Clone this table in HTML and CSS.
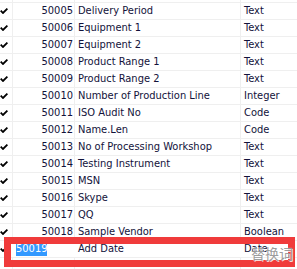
FILE: index.html
```html
<!DOCTYPE html>
<html>
<head>
<meta charset="utf-8">
<link rel="stylesheet" href="styles.css">
</head>
<body>
<div class="grid">
  <div class="row top"><div class="c chk"></div><div class="c num"></div><div class="c name"></div><div class="c type"></div></div>
  <div class="row"><div class="c chk"><svg viewBox="0 0 8 6" width="8" height="6"><path d="M0.7 2.6 L3 5 L7.4 0.6" fill="none" stroke="#000" stroke-width="1.8"/></svg></div><div class="c num">50005</div><div class="c name">Delivery Period</div><div class="c type">Text</div></div>
  <div class="row"><div class="c chk"><svg viewBox="0 0 8 6" width="8" height="6"><path d="M0.7 2.6 L3 5 L7.4 0.6" fill="none" stroke="#000" stroke-width="1.8"/></svg></div><div class="c num">50006</div><div class="c name">Equipment 1</div><div class="c type">Text</div></div>
  <div class="row"><div class="c chk"><svg viewBox="0 0 8 6" width="8" height="6"><path d="M0.7 2.6 L3 5 L7.4 0.6" fill="none" stroke="#000" stroke-width="1.8"/></svg></div><div class="c num">50007</div><div class="c name">Equipment 2</div><div class="c type">Text</div></div>
  <div class="row"><div class="c chk"><svg viewBox="0 0 8 6" width="8" height="6"><path d="M0.7 2.6 L3 5 L7.4 0.6" fill="none" stroke="#000" stroke-width="1.8"/></svg></div><div class="c num">50008</div><div class="c name">Product Range 1</div><div class="c type">Text</div></div>
  <div class="row"><div class="c chk"><svg viewBox="0 0 8 6" width="8" height="6"><path d="M0.7 2.6 L3 5 L7.4 0.6" fill="none" stroke="#000" stroke-width="1.8"/></svg></div><div class="c num">50009</div><div class="c name">Product Range 2</div><div class="c type">Text</div></div>
  <div class="row"><div class="c chk"><svg viewBox="0 0 8 6" width="8" height="6"><path d="M0.7 2.6 L3 5 L7.4 0.6" fill="none" stroke="#000" stroke-width="1.8"/></svg></div><div class="c num">50010</div><div class="c name">Number of Production Line</div><div class="c type">Integer</div></div>
  <div class="row"><div class="c chk"><svg viewBox="0 0 8 6" width="8" height="6"><path d="M0.7 2.6 L3 5 L7.4 0.6" fill="none" stroke="#000" stroke-width="1.8"/></svg></div><div class="c num">50011</div><div class="c name">ISO Audit No</div><div class="c type">Code</div></div>
  <div class="row"><div class="c chk"><svg viewBox="0 0 8 6" width="8" height="6"><path d="M0.7 2.6 L3 5 L7.4 0.6" fill="none" stroke="#000" stroke-width="1.8"/></svg></div><div class="c num">50012</div><div class="c name">Name.Len</div><div class="c type">Code</div></div>
  <div class="row"><div class="c chk"><svg viewBox="0 0 8 6" width="8" height="6"><path d="M0.7 2.6 L3 5 L7.4 0.6" fill="none" stroke="#000" stroke-width="1.8"/></svg></div><div class="c num">50013</div><div class="c name">No of Processing Workshop</div><div class="c type">Text</div></div>
  <div class="row"><div class="c chk"><svg viewBox="0 0 8 6" width="8" height="6"><path d="M0.7 2.6 L3 5 L7.4 0.6" fill="none" stroke="#000" stroke-width="1.8"/></svg></div><div class="c num">50014</div><div class="c name">Testing Instrument</div><div class="c type">Text</div></div>
  <div class="row"><div class="c chk"><svg viewBox="0 0 8 6" width="8" height="6"><path d="M0.7 2.6 L3 5 L7.4 0.6" fill="none" stroke="#000" stroke-width="1.8"/></svg></div><div class="c num">50015</div><div class="c name">MSN</div><div class="c type">Text</div></div>
  <div class="row"><div class="c chk"><svg viewBox="0 0 8 6" width="8" height="6"><path d="M0.7 2.6 L3 5 L7.4 0.6" fill="none" stroke="#000" stroke-width="1.8"/></svg></div><div class="c num">50016</div><div class="c name">Skype</div><div class="c type">Text</div></div>
  <div class="row"><div class="c chk"><svg viewBox="0 0 8 6" width="8" height="6"><path d="M0.7 2.6 L3 5 L7.4 0.6" fill="none" stroke="#000" stroke-width="1.8"/></svg></div><div class="c num">50017</div><div class="c name">QQ</div><div class="c type">Text</div></div>
  <div class="row"><div class="c chk"><svg viewBox="0 0 8 6" width="8" height="6"><path d="M0.7 2.6 L3 5 L7.4 0.6" fill="none" stroke="#000" stroke-width="1.8"/></svg></div><div class="c num">50018</div><div class="c name">Sample Vendor</div><div class="c type">Boolean</div></div>
  <div class="row edit"><div class="c chk"><svg viewBox="0 0 8 6" width="8" height="6"><path d="M0.7 2.6 L3 5 L7.4 0.6" fill="none" stroke="#000" stroke-width="1.8"/></svg></div><div class="c num lead"><span class="sel">50019</span></div><div class="c name">Add Date</div><div class="c type">Date</div></div>
  <div class="row"><div class="c chk"></div><div class="c num"></div><div class="c name"></div><div class="c type"></div></div>
</div>
<div class="mark"></div>
<div class="wm">替换词</div>
</body>
</html>
```

FILE: styles.css
```css
html, body {
  margin: 0;
  padding: 0;
  background: #ffffff;
  overflow: hidden;
}
body {
  width: 297px;
  height: 269px;
  position: relative;
  font-family: "DejaVu Sans Condensed", "DejaVu Sans", sans-serif;
  font-size: 11px;
  color: #12123a;
}
.grid {
  display: flex;
  flex-direction: column;
}
.row {
  display: grid;
  grid-template-columns: 13px 62px 166px 1fr;
  height: 17px;
  border-top: 1px solid #efefef;
  box-sizing: border-box;
}
.row.top {
  height: 2px;
  border-top: none;
}
.c {
  border-right: 1px solid #efefef;
  box-sizing: border-box;
  line-height: 16px;
  white-space: nowrap;
  overflow: hidden;
}
.c.type {
  border-right: none;
  padding-left: 3px;
}
.chk {
  display: flex;
  align-items: center;
}
.chk svg {
  display: block;
}
.num {
  text-align: right;
  padding-right: 1px;
}
.name {
  padding-left: 3px;
}
.row.edit .c {
  border-right-color: #ffffff;
}
.num.lead {
  text-align: left;
  padding-left: 3px;
}
.sel {
  background: #3399ff;
  color: #ffffff;
  padding: 1px 0;
}
.mark {
  position: absolute;
  left: 4px;
  top: 237px;
  width: 291px;
  height: 30px;
  box-sizing: border-box;
  border: 7px solid #f03b3b;
}
.wm {
  position: absolute;
  left: 251px;
  top: 245px;
  font-family: "Noto Sans CJK SC", sans-serif;
  font-size: 14px;
  line-height: 17px;
  color: rgba(130, 130, 130, 0.8);
  text-shadow: 0 0 1px #ffffff, 1px 1px 0 rgba(255, 255, 255, 0.8);
}
```
